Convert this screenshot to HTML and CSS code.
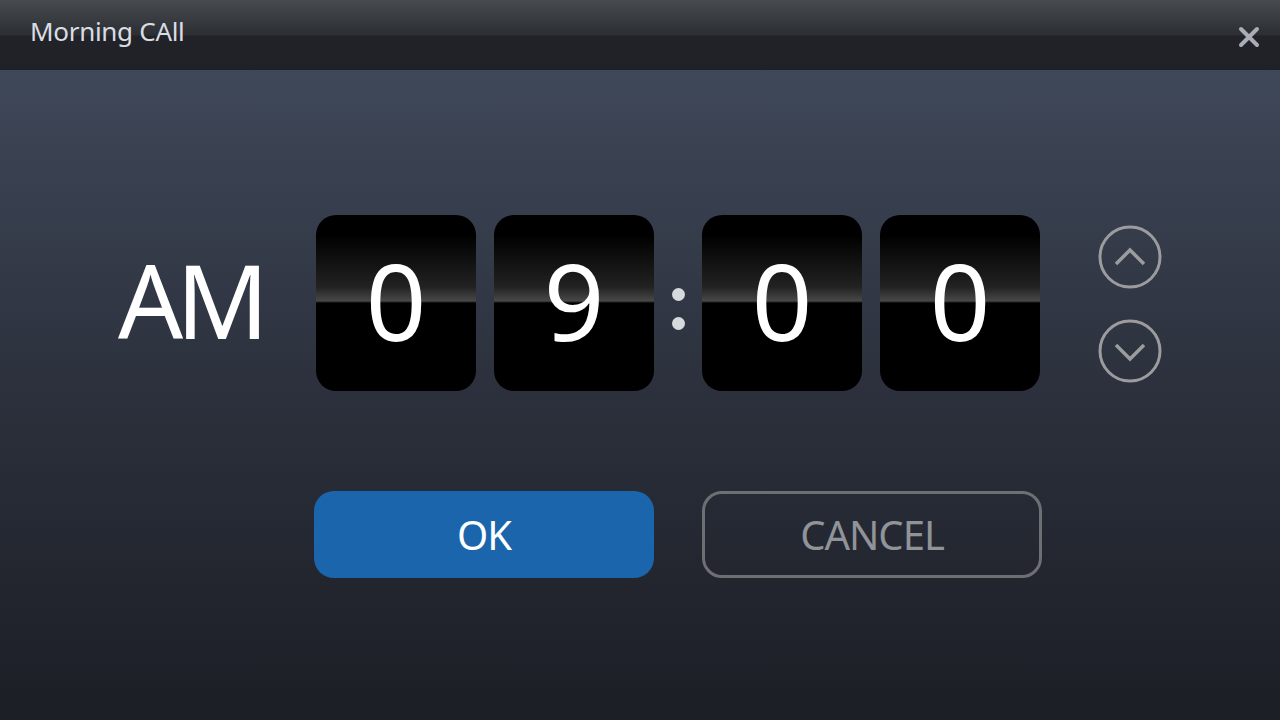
FILE: index.html
```html
<!DOCTYPE html>
<html lang="en">
<head>
    <meta charset="UTF-8">
    <title>Morning CAll</title>
    <link rel="stylesheet" href="styles.css">
</head>
<body>
    <div class="header">
        <h1>Morning CAll</h1>
        <button class="close" aria-label="Close">
            <svg width="22" height="22" viewBox="0 0 22 22"><path d="M3 3L19 19M19 3L3 19" stroke="#a9aeb6" stroke-width="4" stroke-linecap="round"/></svg>
        </button>
    </div>

    <div class="main">
        <div class="clock">
            <div class="ampm">AM</div>
            <div class="digits">
                <div class="card"><span>0</span></div>
                <div class="card"><span>9</span></div>
                <div class="colon"><i></i><i></i></div>
                <div class="card"><span>0</span></div>
                <div class="card"><span>0</span></div>
            </div>
            <div class="arrows">
                <button class="arrow">
                    <svg width="66" height="66" viewBox="0 0 66 66"><circle cx="33" cy="33" r="30" fill="none" stroke="#9c9c9e" stroke-width="3"/><path d="M19 40L33 26L47 40" fill="none" stroke="#9c9c9e" stroke-width="3.5"/></svg>
                </button>
                <button class="arrow">
                    <svg width="66" height="66" viewBox="0 0 66 66"><circle cx="33" cy="33" r="30" fill="none" stroke="#9c9c9e" stroke-width="3"/><path d="M19 27L33 41L47 27" fill="none" stroke="#9c9c9e" stroke-width="3.5"/></svg>
                </button>
            </div>
        </div>

        <div class="actions">
            <button class="btn ok">OK</button>
            <button class="btn cancel">CANCEL</button>
        </div>
    </div>
</body>
</html>
```

FILE: styles.css
```css
body {
    margin: 0;
    width: 1280px;
    height: 720px;
    overflow: hidden;
    font-family: "Noto Sans", "Open Sans", sans-serif;
    background: linear-gradient(to bottom, #3f4859 70px, #2c313d 380px, #1c1e25 720px);
}
.header {
    height: 70px;
    display: flex;
    align-items: center;
    justify-content: space-between;
    background: linear-gradient(to bottom, #474a4f 0, #2b2e33 35px, #212328 36px, #1f2126 70px);
}
.header h1 {
    margin: 0 0 8px 30px;
    font-size: 26px;
    font-weight: 400;
    color: #d9dde3;
    letter-spacing: -0.3px;
}
.close {
    background: none;
    border: none;
    padding: 0;
    margin: 4px 20px 0 0;
    width: 22px;
    height: 22px;
}
.main {
    display: flex;
    flex-direction: column;
    align-items: flex-start;
}
.clock {
    display: flex;
    align-items: center;
    margin-top: 145px;
}
.ampm {
    width: 198px;
    font-size: 102px;
    color: #ffffff;
    letter-spacing: -7px;
    margin-left: 118px;
    line-height: 1;
    margin-top: -6px;
}
.digits {
    display: flex;
    align-items: center;
    gap: 18px;
}
.card {
    width: 160px;
    height: 176px;
    border-radius: 20px;
    background: linear-gradient(to bottom, #000 0, #000 20px, #222 72px, #484848 86px, #000 88px, #000 100%);
    display: flex;
    align-items: center;
    justify-content: center;
}
.card span {
    font-size: 106px;
    color: #fff;
    line-height: 1;
    margin-top: -6px;
}
.colon {
    width: 12px;
    display: flex;
    flex-direction: column;
    gap: 16px;
    align-items: center;
    margin: 12px 0 0;
}
.colon i {
    width: 13px;
    height: 13px;
    border-radius: 50%;
    background: #d6d9de;
}
.arrows {
    display: flex;
    flex-direction: column;
    gap: 28px;
    margin-left: 57px;
    margin-top: 2px;
}
.arrow {
    background: none;
    border: none;
    padding: 0;
    width: 66px;
    height: 66px;
}
.actions {
    display: flex;
    gap: 48px;
    margin-top: 100px;
    margin-left: 314px;
}
.btn {
    width: 340px;
    height: 87px;
    border-radius: 20px;
    font-family: "Noto Sans", sans-serif;
    font-size: 40px;
    letter-spacing: -1px;
    cursor: pointer;
}
.ok {
    background-color: #1a65ab;
    color: #fff;
    border: none;
}
.cancel {
    background: transparent;
    border: 3px solid #6e6f73;
    color: #909398;
}
```
